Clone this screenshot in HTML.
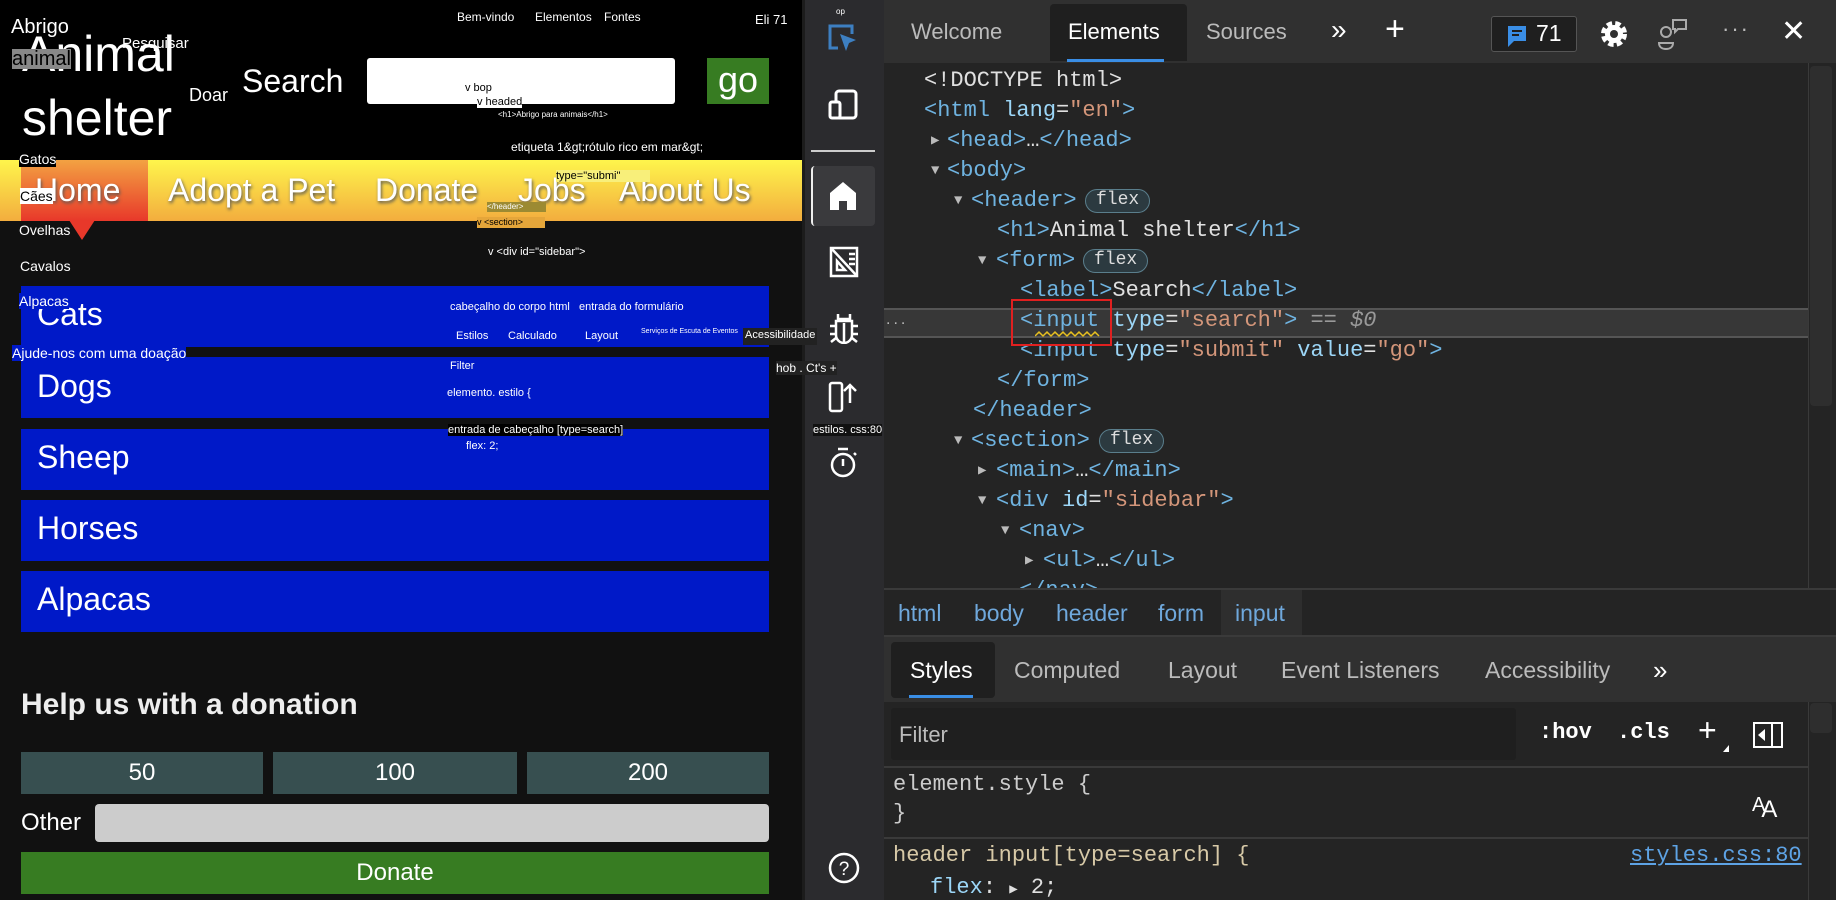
<!DOCTYPE html>
<html><head><meta charset="utf-8"><style>
*{margin:0;padding:0;box-sizing:border-box}
body{width:1836px;height:900px;overflow:hidden;background:#111;font-family:"Liberation Sans",sans-serif;position:relative}
.a{position:absolute;white-space:nowrap}
.m{font-family:"Liberation Mono",monospace;font-size:22px}
.t{color:#6fb3e0}.n{color:#9cd6f7}.v{color:#d4967a}.w{color:#e0e0e0}
.tri{color:#bbb;font-size:14px}
.badge{position:absolute;border:1.5px solid #5a7e8c;background:#2c3a40;color:#ddd;border-radius:12px;font-size:18px;padding:0 10px;height:24px;line-height:21px;font-family:"Liberation Mono",monospace}
.sm{font-size:11px;color:#fff}
.top{z-index:10}
</style></head><body>
<!-- LEFT PAGE -->
<div class="a" style="left:0;top:0;width:802px;height:160px;background:#000"></div>
<div class="a" style="left:0;top:160px;width:802px;height:61px;background:linear-gradient(#fef54c,#f3ad3e)"></div>
<div class="a" style="left:21px;top:160px;width:127px;height:61px;background:linear-gradient(#f3a242,#e8382a)"></div>
<div class="a" style="left:69px;top:220px;width:0;height:0;border-left:13px solid transparent;border-right:13px solid transparent;border-top:20px solid #e8382a"></div>
<div class="a" style="left:22px;top:22px;color:#fff;font-size:50px;line-height:64px">Animal<br>shelter</div>
<div class="a" style="left:11px;top:16px;color:#fff;font-size:20px">Abrigo</div>
<div class="a" style="left:12px;top:49px;background:#888;color:#000;font-size:20px;line-height:20px">animal</div>
<div class="a" style="left:122px;top:35px;color:#fff;font-size:15px">Pesquisar</div>
<div class="a" style="left:189px;top:85px;color:#fff;font-size:18px">Doar</div>
<div class="a" style="left:242px;top:63px;color:#fff;font-size:32px">Search</div>
<div class="a" style="left:367px;top:58px;width:308px;height:46px;background:#fff;border-radius:3px"></div>
<div class="a" style="left:707px;top:58px;width:62px;height:46px;background:#377c22;color:#fff;font-size:36px;text-align:center;line-height:44px">go</div>
<div class="a" style="left:457px;top:10px;color:#fff;font-size:12px">Bem-vindo</div>
<div class="a" style="left:535px;top:10px;color:#fff;font-size:12px">Elementos</div>
<div class="a" style="left:604px;top:10px;color:#fff;font-size:12px">Fontes</div>
<div class="a" style="left:755px;top:12px;color:#fff;font-size:13px">Eli 71</div>
<div class="a sm" style="left:465px;top:82px;color:#000">v bop</div>
<div class="a sm" style="left:477px;top:96px;color:#000;background:#fff">v headed</div>
<div class="a" style="left:498px;top:110px;color:#fff;font-size:8px">&lt;h1&gt;Abrigo para animais&lt;/h1&gt;</div>
<div class="a" style="left:511px;top:140px;color:#fff;font-size:12px">etiqueta 1&amp;gt;rótulo rico em mar&amp;gt;</div>
<div class="a" style="left:19px;top:151px;color:#fff;background:#000;font-size:14px">Gatos</div>
<div class="a" style="top:172px;left:0;color:#fff;font-size:32px;text-shadow:1px 2px 3px #555">
<span class="a" style="left:35px">Home</span><span class="a" style="left:168px">Adopt a Pet</span><span class="a" style="left:375px">Donate</span><span class="a" style="left:518px">Jobs</span><span class="a" style="left:619px">About Us</span></div>
<div class="a" style="left:20px;top:188px;background:#fff;color:#000;font-size:14px">Cães</div>
<div class="a" style="left:556px;top:170px;background:#f8ef7a;color:#000;font-size:11px;padding-right:30px">type="submi"</div>
<div class="a" style="left:487px;top:202px;width:59px;height:10px;background:#9c8a32;color:#fff;font-size:8px">&lt;/header&gt;</div>
<div class="a" style="left:477px;top:217px;width:68px;height:11px;background:#e5a63a;color:#000;font-size:9px">v &lt;section&gt;</div>
<div class="a" style="left:19px;top:222px;color:#fff;font-size:14px">Ovelhas</div>
<div class="a" style="left:488px;top:246px;color:#fff;font-size:11px">v &lt;div id="sidebar"&gt;</div>
<div class="a" style="left:20px;top:258px;color:#fff;font-size:14px">Cavalos</div>
<!-- blue items -->
<div class="a" style="left:21px;top:286px;width:748px;height:61px;background:#0019c8"></div>
<div class="a" style="left:21px;top:357px;width:748px;height:61px;background:#0019c8"></div>
<div class="a" style="left:21px;top:429px;width:748px;height:61px;background:#0019c8"></div>
<div class="a" style="left:21px;top:500px;width:748px;height:61px;background:#0019c8"></div>
<div class="a" style="left:21px;top:571px;width:748px;height:61px;background:#0019c8"></div>
<div class="a" style="left:37px;top:296px;color:#fff;font-size:32px">Cats</div>
<div class="a" style="left:37px;top:368px;color:#fff;font-size:32px">Dogs</div>
<div class="a" style="left:37px;top:439px;color:#fff;font-size:32px">Sheep</div>
<div class="a" style="left:37px;top:510px;color:#fff;font-size:32px">Horses</div>
<div class="a" style="left:37px;top:581px;color:#fff;font-size:32px">Alpacas</div>
<div class="a" style="left:19px;top:293px;color:#fff;background:#0019c8;font-size:14px">Alpacas</div>
<div class="a sm" style="left:450px;top:301px">cabeçalho do corpo html</div>
<div class="a sm" style="left:579px;top:301px">entrada do formulário</div>
<div class="a sm" style="left:456px;top:330px">Estilos</div>
<div class="a sm" style="left:508px;top:330px">Calculado</div>
<div class="a sm" style="left:585px;top:330px">Layout</div>
<div class="a" style="left:641px;top:328px;color:#fff;font-size:7px">Serviços de Escuta de Eventos</div>
<div class="a top" style="left:743px;top:328px;height:17px;background:#222;color:#fff;font-size:11px;padding:1px 2px">Acessibilidade</div>
<div class="a" style="left:12px;top:345px;background:#0019c8;color:#fff;font-size:14px">Ajude-nos com uma doação</div>
<div class="a sm" style="left:450px;top:360px">Filter</div>
<div class="a top" style="left:776px;top:361px;background:#222;color:#fff;font-size:12px">hob . Ct's +</div>
<div class="a sm" style="left:447px;top:387px">elemento. estilo {</div>
<div class="a sm" style="left:448px;top:424px;background:#000">entrada de cabeçalho [type=search]</div>
<div class="a sm" style="left:466px;top:440px">flex: 2;</div>
<div class="a top" style="left:813px;top:424px;background:#111;color:#fff;font-size:11px">estilos. css:80</div>
<div class="a" style="left:21px;top:688px;color:#eee;font-size:30px;font-weight:bold">Help us with a donation</div>
<div class="a" style="left:21px;top:752px;width:242px;height:42px;background:#374f50;color:#fff;font-size:24px;text-align:center;line-height:42px">50</div>
<div class="a" style="left:273px;top:752px;width:244px;height:42px;background:#374f50;color:#fff;font-size:24px;text-align:center;line-height:42px">100</div>
<div class="a" style="left:527px;top:752px;width:242px;height:42px;background:#374f50;color:#fff;font-size:24px;text-align:center;line-height:42px">200</div>
<div class="a" style="left:21px;top:809px;color:#fff;font-size:24px">Other</div>
<div class="a" style="left:95px;top:804px;width:674px;height:38px;background:#ccc;border-radius:4px"></div>
<div class="a" style="left:21px;top:852px;width:748px;height:42px;background:#377c22;color:#fff;font-size:24px;text-align:center;line-height:42px">Donate</div>

<!-- DEVTOOLS -->
<div class="a" style="left:802px;top:0;width:82px;height:900px;background:#2b2b2e;border-left:3px solid #1c1c1c"></div>
<div class="a" style="left:836px;top:7px;color:#fff;font-size:8px">op</div>
<svg class="a" style="left:826px;top:22px" width="34" height="32" viewBox="0 0 34 32"><path d="M12 26H4V4h22v8" fill="none" stroke="#3d7fc1" stroke-width="3"/><path d="M14 12l16 6-7 3-3 8z" fill="#3d7fc1"/></svg>
<svg class="a" style="left:827px;top:89px" width="32" height="32" viewBox="0 0 32 32" fill="none" stroke="#fff" stroke-width="3"><rect x="9" y="2" width="20" height="27" rx="3"/><rect x="3" y="13" width="10" height="16" rx="2" fill="#2b2b2e"/></svg>
<div class="a" style="left:811px;top:150px;width:64px;height:2px;background:#ccc"></div>
<div class="a" style="left:811px;top:166px;width:64px;height:60px;background:#3a3a3d;border-left:2px solid #eee;border-radius:4px"></div>
<svg class="a" style="left:828px;top:180px" width="30" height="31" viewBox="0 0 30 31"><path d="M15 2L2 13v17h9V21h8v9h9V13z" fill="#fff"/></svg>
<svg class="a" style="left:829px;top:246px" width="30" height="32" viewBox="0 0 30 32" fill="none" stroke="#fff" stroke-width="2.5"><rect x="2" y="2" width="26" height="28"/><path d="M2 2l26 28M8 24h8l-8-9zM20 8h6M20 13h6M20 18h6"/></svg>
<svg class="a" style="left:828px;top:312px" width="32" height="32" viewBox="0 0 32 32" fill="none" stroke="#fff" stroke-width="2.5"><path d="M10 2v5h12V2M8 9h16v14a8 8 0 0 1-16 0zM16 11v20M2 14h6M24 14h6M2 22h6M24 22h6M3 30l5-4M29 30l-5-4"/></svg>
<svg class="a" style="left:828px;top:381px" width="30" height="32" viewBox="0 0 30 32" fill="none" stroke="#fff" stroke-width="2.5"><rect x="2" y="2" width="12" height="28" rx="2"/><path d="M22 22V4M16 10l6-6 6 6"/></svg>
<svg class="a" style="left:828px;top:446px" width="30" height="32" viewBox="0 0 30 32" fill="none" stroke="#fff" stroke-width="2.5"><circle cx="15" cy="19" r="11"/><path d="M10 3h10M15 13v7M26 7l2 2"/></svg>
<svg class="a" style="left:828px;top:852px" width="32" height="32" viewBox="0 0 32 32" fill="none" stroke="#fff" stroke-width="2.5"><circle cx="16" cy="16" r="14"/><text x="16" y="23" fill="#fff" stroke="none" font-size="19" text-anchor="middle" font-family="Liberation Sans">?</text></svg>

<div class="a" style="left:884px;top:0;width:952px;height:63px;background:#303030"></div>
<div class="a" style="left:1050px;top:4px;width:137px;height:57px;background:#1f1f1f;border-radius:4px 4px 0 0"></div>
<div class="a" style="left:1067px;top:59px;width:97px;height:3px;background:#3a8ee6"></div>
<div class="a" style="left:911px;top:19px;color:#bbb;font-size:22px">Welcome</div>
<div class="a" style="left:1068px;top:19px;color:#fff;font-size:22px">Elements</div>
<div class="a" style="left:1206px;top:19px;color:#bbb;font-size:22px">Sources</div>
<div class="a" style="left:1331px;top:14px;color:#fff;font-size:28px">»</div>
<div class="a" style="left:1385px;top:10px;color:#fff;font-size:34px">+</div>
<div class="a" style="left:1491px;top:16px;width:86px;height:36px;background:#1f1f1f;border:1px solid #555;border-radius:3px"></div>
<svg class="a" style="left:1506px;top:24px" width="22" height="24" viewBox="0 0 22 24"><path d="M2 2h18v15H8l-6 6z" fill="#3a8ee6"/><path d="M6 7h10M6 11h7" stroke="#1f1f1f" stroke-width="2"/></svg>
<div class="a" style="left:1536px;top:20px;color:#fff;font-size:23px">71</div>
<svg class="a" style="left:1598px;top:18px" width="32" height="32" viewBox="0 0 32 32"><circle cx="16" cy="16" r="10" fill="none" stroke="#fff" stroke-width="6" stroke-dasharray="5 3"/><circle cx="16" cy="16" r="9" fill="#fff"/><circle cx="16" cy="16" r="4" fill="#303030"/></svg>
<svg class="a" style="left:1657px;top:17px" width="32" height="34" viewBox="0 0 32 34" fill="none" stroke="#aaa" stroke-width="2"><circle cx="9" cy="15" r="5"/><path d="M2 26c0 4 3 6 7 6s7-2 7-6z"/><path d="M16 3h13v9h-8l-3 3v-3h-2z"/></svg>
<div class="a" style="left:1722px;top:16px;color:#bbb;font-size:22px;letter-spacing:2px">···</div>
<div class="a" style="left:1781px;top:14px;color:#fff;font-size:30px">✕</div>

<div class="a" style="left:884px;top:63px;width:952px;height:526px;background:#242424"></div>
<div class="a" style="left:1808px;top:63px;width:28px;height:526px;background:#242424;border-left:1px solid #3a3a3a"></div>
<div class="a" style="left:1810px;top:66px;width:22px;height:340px;background:#2e2e2e;border-radius:4px"></div>
<div class="a" style="left:884px;top:308px;width:924px;height:30px;background:#373737;border-top:2px solid #555;border-bottom:2px solid #555"></div>
<div class="a" style="left:886px;top:311px;color:#bbb;font-size:16px;letter-spacing:3px">...</div>
<div class="m" style="position:absolute;left:0;top:0;line-height:30px">
<div class="a w" style="left:924px;top:66px">&lt;!DOCTYPE html&gt;</div>
<div class="a" style="left:924px;top:96px"><span class="t">&lt;html </span><span class="n">lang</span><span class="w">=</span><span class="v">"en"</span><span class="t">&gt;</span></div>
<div class="a tri" style="left:931px;top:126px">▶</div><div class="a t" style="left:947px;top:126px">&lt;head&gt;<span class="w">…</span>&lt;/head&gt;</div>
<div class="a tri" style="left:931px;top:156px">▼</div><div class="a t" style="left:947px;top:156px">&lt;body&gt;</div>
<div class="a tri" style="left:954px;top:186px">▼</div><div class="a t" style="left:971px;top:186px">&lt;header&gt;</div>
<div class="a t" style="left:997px;top:216px">&lt;h1&gt;<span class="w">Animal shelter</span>&lt;/h1&gt;</div>
<div class="a tri" style="left:978px;top:246px">▼</div><div class="a t" style="left:996px;top:246px">&lt;form&gt;</div>
<div class="a t" style="left:1020px;top:276px">&lt;label&gt;<span class="w">Search</span>&lt;/label&gt;</div>
<div class="a" style="left:1020px;top:306px"><span class="t">&lt;input </span><span class="n">type</span><span class="w">=</span><span class="v">"search"</span><span class="t">&gt;</span><span style="color:#999"> == <i>$0</i></span></div>
<div class="a" style="left:1020px;top:336px"><span class="t">&lt;input </span><span class="n">type</span><span class="w">=</span><span class="v">"submit"</span> <span class="n">value</span><span class="w">=</span><span class="v">"go"</span><span class="t">&gt;</span></div>
<div class="a t" style="left:997px;top:366px">&lt;/form&gt;</div>
<div class="a t" style="left:973px;top:396px">&lt;/header&gt;</div>
<div class="a tri" style="left:954px;top:426px">▼</div><div class="a t" style="left:971px;top:426px">&lt;section&gt;</div>
<div class="a tri" style="left:978px;top:456px">▶</div><div class="a t" style="left:996px;top:456px">&lt;main&gt;<span class="w">…</span>&lt;/main&gt;</div>
<div class="a tri" style="left:978px;top:486px">▼</div><div class="a" style="left:996px;top:486px"><span class="t">&lt;div </span><span class="n">id</span><span class="w">=</span><span class="v">"sidebar"</span><span class="t">&gt;</span></div>
<div class="a tri" style="left:1001px;top:516px">▼</div><div class="a t" style="left:1019px;top:516px">&lt;nav&gt;</div>
<div class="a tri" style="left:1025px;top:546px">▶</div><div class="a t" style="left:1043px;top:546px">&lt;ul&gt;<span class="w">…</span>&lt;/ul&gt;</div>
<div class="a t" style="left:1019px;top:576px;height:12px;overflow:hidden">&lt;/nav&gt;</div>
</div>
<div class="badge" style="left:1085px;top:189px">flex</div>
<div class="badge" style="left:1083px;top:249px">flex</div>
<div class="badge" style="left:1099px;top:429px">flex</div>
<div class="a" style="left:1011px;top:299px;width:101px;height:47px;border:2px solid #e02020"></div>
<svg class="a" style="left:1035px;top:330px" width="68" height="8"><path d="M0 6l4-4 4 4 4-4 4 4 4-4 4 4 4-4 4 4 4-4 4 4 4-4 4 4 4-4 4 4 4-4 4 4" fill="none" stroke="#e8c020" stroke-width="1.5"/></svg>

<!-- breadcrumb -->
<div class="a" style="left:884px;top:588px;width:952px;height:49px;background:#242424;border-top:2px solid #3a3a3a;border-bottom:2px solid #3a3a3a"></div>
<div class="a" style="left:1221px;top:590px;width:81px;height:45px;background:#2e2e2e"></div>
<div class="a" style="top:600px;left:0;color:#6fa8dc;font-size:23px"><span class="a" style="left:898px">html</span><span class="a" style="left:974px">body</span><span class="a" style="left:1056px">header</span><span class="a" style="left:1158px">form</span><span class="a" style="left:1235px">input</span></div>
<div class="a" style="left:884px;top:637px;width:952px;height:65px;background:#303030"></div>
<div class="a" style="left:891px;top:642px;width:104px;height:56px;background:#1f1f1f;border-radius:4px"></div>
<div class="a" style="left:909px;top:695px;width:64px;height:3px;background:#3a8ee6"></div>
<div class="a" style="top:657px;left:0;color:#bbb;font-size:23px"><span class="a" style="left:910px;color:#fff">Styles</span><span class="a" style="left:1014px">Computed</span><span class="a" style="left:1168px">Layout</span><span class="a" style="left:1281px">Event Listeners</span><span class="a" style="left:1485px">Accessibility</span><span class="a" style="left:1653px;color:#fff;font-size:26px;top:-2px">»</span></div>
<div class="a" style="left:884px;top:702px;width:924px;height:198px;background:#242424"></div>
<div class="a" style="left:1808px;top:702px;width:28px;height:198px;background:#242424;border-left:1px solid #3a3a3a"></div>
<div class="a" style="left:1810px;top:703px;width:22px;height:30px;background:#2e2e2e;border-radius:4px"></div>
<div class="a" style="left:891px;top:708px;width:625px;height:52px;background:#1f1f1f;border-radius:3px"></div>
<div class="a" style="left:899px;top:722px;color:#bbb;font-size:22px">Filter</div>
<div class="a m" style="left:1539px;top:720px;color:#fff;font-weight:bold">:hov</div>
<div class="a m" style="left:1617px;top:720px;color:#fff;font-weight:bold">.cls</div>
<div class="a" style="left:1698px;top:712px;color:#fff;font-size:32px">+</div>
<div class="a" style="left:1723px;top:745px;width:0;height:0;border-left:6px solid transparent;border-bottom:7px solid #fff"></div>
<div class="a" style="left:1753px;top:722px;width:30px;height:26px;border:2px solid #fff"></div>
<div class="a" style="left:1771px;top:722px;width:2px;height:26px;background:#fff"></div>
<div class="a" style="left:1758px;top:729px;width:0;height:0;border-top:6px solid transparent;border-bottom:6px solid transparent;border-right:7px solid #fff"></div>
<div class="a" style="left:884px;top:766px;width:924px;height:2px;background:#3a3a3a"></div>
<div class="a m" style="left:893px;top:772px;color:#ccc">element.style {</div>
<div class="a m" style="left:893px;top:801px;color:#ccc">}</div>
<div class="a" style="left:1752px;top:790px;color:#fff;font-size:20px">A<span style="font-size:24px;position:relative;top:6px;left:-4px">A</span></div>
<div class="a" style="left:884px;top:837px;width:924px;height:2px;background:#3a3a3a"></div>
<div class="a m" style="left:893px;top:843px;color:#d7c9a7">header input[type=search] {</div>
<div class="a m" style="left:1630px;top:843px;color:#5ea3e5;text-decoration:underline">styles.css:80</div>
<div class="a m" style="left:930px;top:875px"><span class="n">flex</span><span class="w">: <span style="font-size:14px">▶</span> 2;</span></div>
</body></html>
